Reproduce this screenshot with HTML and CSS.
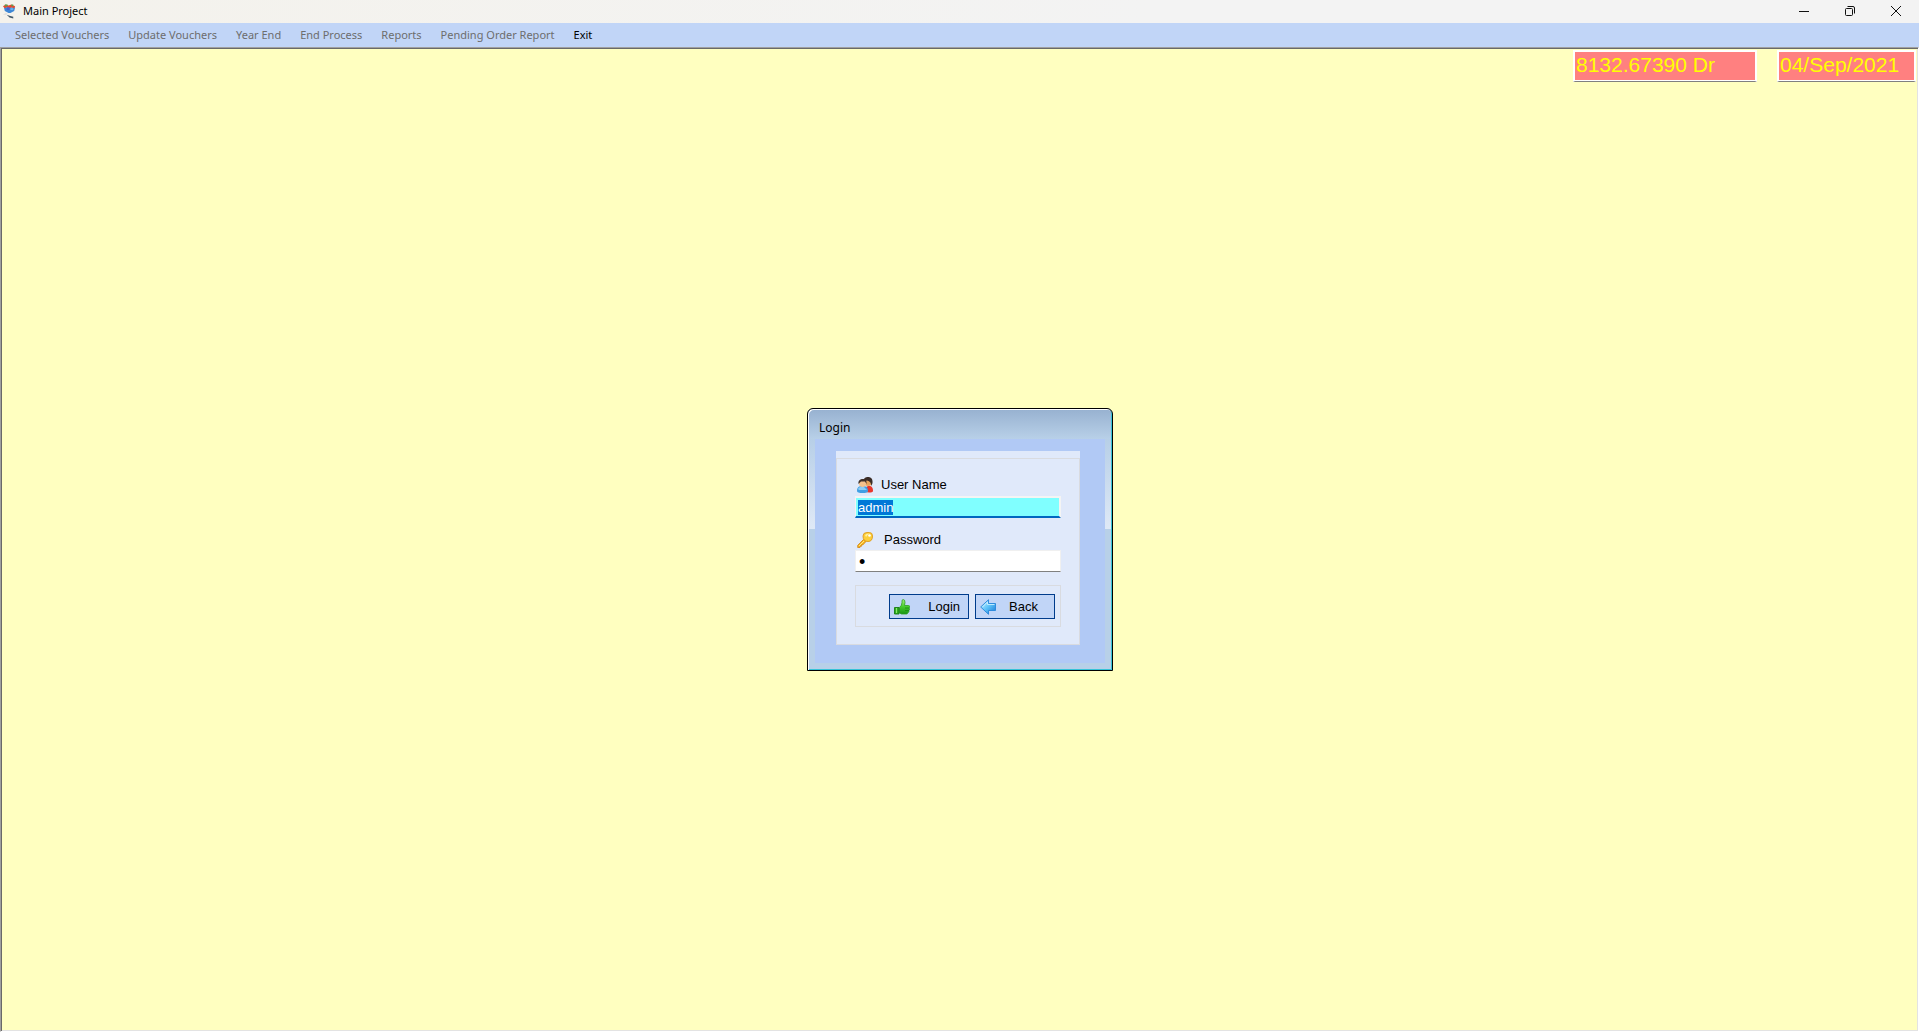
FILE: index.html
```
<!DOCTYPE html>
<html lang="en">
<head>
<meta charset="utf-8">
<title>Main Project</title>
<link rel="stylesheet" href="styles.css">
</head>
<body>
<header class="titlebar">
  <svg class="app-icon" viewBox="0 0 16 16" aria-hidden="true">
    <path d="M2 4h12l-1 4-4 2H7L3 8z" fill="#3c86d6"/>
    <path d="M1 3l3-2 3 1 3-1 4 2-1 2-3-1-2 1-3-1-2 1z" fill="#e8472d"/>
    <path d="M3 1h3v2H3zM10 1h2v2h-2z" fill="#5aa04c"/>
    <path d="M5 4h3v3H5z" fill="#4b5fd0"/><path d="M9 5h3v2H9z" fill="#68b5ef"/>
    <path d="M1 12l3-2 2 1-2 1z" fill="#dcdcdc"/>
    <path d="M5 12l3 1 4 1v2l-4-1z" fill="#41596b"/>
  </svg>
  <h1 class="app-title">Main Project</h1>
  <div class="window-buttons">
    <button class="window-button" type="button" aria-label="Minimize"><svg viewBox="0 0 12 12"><path d="M1 6.500h10"/></svg></button>
    <button class="window-button" type="button" aria-label="Restore"><svg viewBox="0 0 12 12"><rect x="1.500" y="3.500" width="7" height="7" rx="1"/><path d="M3.500 1.500H9q1.500 0 1.500 1.500v5.500"/></svg></button>
    <button class="window-button" type="button" aria-label="Close"><svg viewBox="0 0 12 12"><path d="M1 1l10 10M11 1L1 11"/></svg></button>
  </div>
</header>
<nav class="menubar">
  <button class="menu-item" type="button" disabled>Selected Vouchers</button>
  <button class="menu-item" type="button" disabled>Update Vouchers</button>
  <button class="menu-item" type="button" disabled>Year End</button>
  <button class="menu-item" type="button" disabled>End Process</button>
  <button class="menu-item" type="button" disabled>Reports</button>
  <button class="menu-item" type="button" disabled>Pending Order Report</button>
  <button class="menu-item" type="button">Exit</button>
</nav>
<main class="workspace">
  <div class="status">
    <input class="status-box balance" type="text" value="8132.67390 Dr" aria-label="Balance" readonly>
    <input class="status-box date" type="text" value="04/Sep/2021" aria-label="Date" readonly>
  </div>
  <section class="dialog" aria-labelledby="dialog-title">
    <h2 class="dialog-title" id="dialog-title">Login</h2>
    <div class="dialog-client">
      <form class="panel">
        <div class="panel-body">
          <label class="field-label" for="user">
            <svg class="icon" viewBox="0 0 16 16" aria-hidden="true">
              <path d="M8 15c0-4 1-6 4-6 3 0 4 2 4 5 0 1-2 1.500-4 1.500z" fill="#e8362c"/>
              <circle cx="11" cy="5" r="4" fill="#e8a45c"/>
              <path d="M6.500 5C6 1 9 0 11 0c3 0 5 2 4.500 6l-1 3C14 6 13 4 10 3.500z" fill="#3a2c26"/>
              <path d="M0 14c0-4 2-5 5.500-5S11 10 11 14c0 1.500-2 2-5.500 2S0 15.500 0 14z" fill="#3f9fe4"/>
              <path d="M1 12c1-2 2-2 4-2h2l3 3H2z" fill="#8bcbf5"/>
              <circle cx="5.500" cy="6.500" r="3.500" fill="#f5c28c"/>
              <path d="M1.500 7C1 3.500 3 2 6 2c2.500 0 4 2 3.500 5L8 4.500H4z" fill="#40312a"/>
            </svg>
            <span>User Name</span>
          </label>
          <input class="field field-user" id="user" type="text" value="admin" spellcheck="false">
          <label class="field-label label-password" for="password">
            <svg class="icon" viewBox="0 0 16 16" aria-hidden="true">
              <path d="M6.500 7.500L.7 13.300v2.200H3v-1.200h1.400v-1.400h1.400L9 9.500z" fill="#f6b51e" stroke="#d08415" stroke-width=".8"/>
              <path d="M6 4q0-3.500 4-3.500h2.500Q15.500.5 15.500 4 15.500 9.500 11 9.500 6 9.500 6 4z" fill="#fccf3a" stroke="#de9a1c" stroke-width=".9"/>
              <path d="M8 3q1-1.500 4-1.500L9 5z" fill="#fff0a0"/>
              <circle cx="12.500" cy="3.500" r="1.300" fill="#fff"/>
              <path d="M7 9l-5 5" stroke="#ffe684"/>
            </svg>
            <span>Password</span>
          </label>
          <input class="field field-password" id="password" type="password" value="1">
          <div class="actions">
            <button class="action" type="submit">
              <svg class="icon" viewBox="0 0 16 16" aria-hidden="true">
                <defs><linearGradient id="g" x2="0" y2="1"><stop stop-color="#a6f07c"/><stop offset=".5" stop-color="#46cb2d"/><stop offset="1" stop-color="#189313"/></linearGradient></defs>
                <path d="M5.500 8.500Q8 6.500 8 3.500V2q0-1.500 1.200-1.500Q11 .5 11 3.500L10.500 6.500h4q1.200 0 1.200 1.300 0 1-.7 1.200.7.500.5 1.500 0 .8-.8 1 .5.800 0 1.500-.2.600-1 .7 0 1.300-1.200 1.300h-5L5.500 14z" fill="url(#g)" stroke="#2c9e20" stroke-width=".8"/>
                <path d="M.5 8.500h4.500V15H.5z" fill="#2fae22" stroke="#167c12" stroke-width=".9"/>
                <path d="M2.500 9v5" stroke="#8be66c"/>
                <path d="M11 9h4M11 11.500h4" stroke="#16880f" stroke-width=".8"/>
              </svg>
              <span class="action-text">Login</span>
            </button>
            <button class="action action-back" type="button">
              <svg class="icon" viewBox="0 0 16 16" aria-hidden="true">
                <defs><linearGradient id="b" x2="1" y2="1"><stop stop-color="#d8f5ff"/><stop offset=".5" stop-color="#5cc2f8"/><stop offset="1" stop-color="#1673d2"/></linearGradient></defs>
                <path d="M.7 8L8.500.7V4.500h7v7h-7v3.800z" fill="url(#b)" stroke="#2586da" stroke-width=".9"/>
                <path d="M2.500 8l5-5v2.500h7" fill="none" stroke="#c9f0ff" stroke-width=".9"/>
              </svg>
              <span class="action-text">Back</span>
            </button>
          </div>
        </div>
      </form>
    </div>
  </section>
</main>
<script src="login.js"></script>
</body>
</html>
```
FILE: styles.css
```
* { box-sizing: border-box; }

body {
  margin: 0;
  min-height: 100vh;
  display: flex;
  flex-direction: column;
  font-family: "Noto Sans", "Open Sans", sans-serif;
  font-size: 11px;
  color: #000;
}

button, input { font: inherit; color: inherit; margin: 0; }

.titlebar {
  display: flex;
  align-items: center;
  height: 23px;
  padding: 0 0 1px 2px;
  background: linear-gradient(90deg, #f4f2ec, #f3f3f3 60%);
}
.app-icon { width: 15px; height: 16px; }
.app-title { margin: 0 0 0 6px; font-size: 11px; font-weight: 400; line-height: 16px; }
.window-buttons { display: flex; margin-left: auto; }
.window-button {
  display: flex;
  align-items: center;
  justify-content: center;
  width: 46px;
  height: 20px;
  padding: 0;
  border: 0;
  background: none;
}
.window-button svg { width: 12px; height: 12px; fill: none; stroke: #111; stroke-width: 1; }

.menubar {
  display: flex;
  gap: 19px;
  height: 24px;
  padding: 0 15px;
  background: #c1d5f7;
}
.menu-item { padding: 0; border: 0; background: none; line-height: 22px; white-space: nowrap; }
.menu-item:disabled { color: #6d6d6d; }

.workspace {
  position: relative;
  flex: 1;
  display: flex;
  align-items: center;
  justify-content: center;
  padding-left: 1px;
  border: 1px solid;
  border-color: #a0a0a0 #fff #fff #a0a0a0;
  box-shadow: inset 1px 1px #696969, inset -1px -1px #e3e3e3;
  background: #ffffc0;
}

.status { position: absolute; top: 2px; right: 2px; display: flex; gap: 20px; }
.status-box {
  height: 32px;
  padding: 0 1px 3px;
  border: 2px solid #fff;
  border-bottom: 1px solid #808080;
  background: #ff8080;
  box-shadow: inset 0 -1px #fff;
  color: #ff0;
  font: 21px "Liberation Sans", Arial, sans-serif;
}
.balance { width: 184px; }
.date { width: 139px; }

.dialog {
  width: 306px;
  border: 1px solid #000;
  border-radius: 6px 6px 0 0;
  background:
    linear-gradient(#97b1d0, #b8d0e8) 0 0 / 100% 30px no-repeat,
    linear-gradient(#b7cfe7, #dfe9f6) 0 30px / 100% 90px no-repeat,
    #b8d0e8;
  box-shadow: inset 1px 1px #fff, inset -1px -1px #36c3d8;
  padding: 1px 7px 7px;
}
.dialog-title {
  margin: 0;
  height: 29px;
  padding: 9px 0 0 4px;
  font-size: 12px;
  font-weight: 400;
  line-height: 17px;
}
.dialog-client { padding: 12px 25px 18px 21px; background: #b1c9f5; }
.panel { padding-top: 7px; background: #e0e9fa; }
.panel-body {
  display: flex;
  flex-direction: column;
  padding: 18px 18px 17px;
  border: 1px solid #d9dbe0;
  font: 13px/16px "Liberation Sans", Arial, sans-serif;
}
.field-label { display: flex; align-items: center; gap: 8px; padding-left: 2px; }
.label-password { gap: 11px; margin-top: 14px; }
.icon { flex: none; width: 16px; height: 16px; }
.field { width: 100%; height: 22px; outline: 0; }
.field-user {
  margin-top: 3px;
  padding: 1px 1px 0 2px;
  border: 2px solid #f4f4f4;
  border-bottom-color: #0067c0;
  border-left-width: 1px;
  background: #80ffff;
}
.field-user::selection { background: #0078d7; color: #fff; }
.field-password {
  margin-top: 2px;
  padding: 2px 3px 0;
  border: 1px solid #f0f0f0;
  border-bottom-color: #808080;
  background: #fff;
  font-size: 18px;
}
.actions {
  display: flex;
  justify-content: flex-end;
  gap: 6px;
  margin-top: 13px;
  padding: 8px 5px 7px;
  border: 1px solid #d9dbe0;
}
.action {
  display: flex;
  align-items: center;
  width: 80px;
  height: 25px;
  padding: 1px 8px 0 4px;
  border: 1px solid #003c8c;
  background: #c1d5f7;
}
.action-back { padding-right: 16px; }
.action-text { flex: 1; text-align: right; }
```
FILE: login.js
```
const user = document.getElementById("user");
user.focus();
user.select();
```
